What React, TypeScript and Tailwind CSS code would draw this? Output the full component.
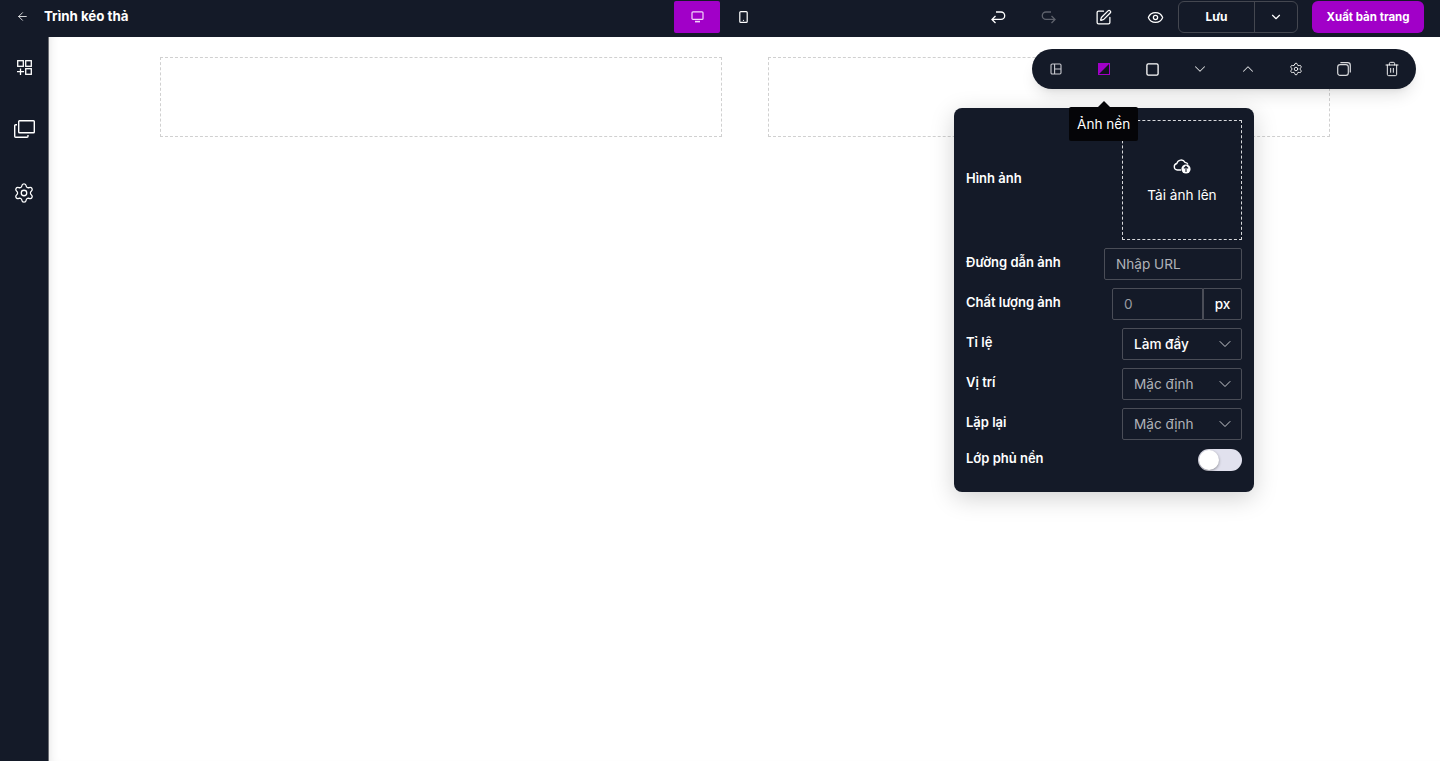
import React from "react";
import { ArrowLeft, SquarePen, Eye, ChevronDown, ChevronUp, Settings, Trash2 } from "lucide-react";

function BlocksIcon() {
  return (
    <svg width="15" height="15" viewBox="0 0 15 15" fill="none" stroke="currentColor" strokeWidth="1.3">
      <rect x="0.7" y="0.7" width="5.6" height="5.6" />
      <rect x="8.7" y="0.7" width="5.6" height="5.6" />
      <rect x="8.7" y="8.7" width="5.6" height="5.6" />
      <path d="M3.5 8.5v6.5M0 11.7h7" />
    </svg>
  );
}

function PagesIcon() {
  return (
    <svg width="21" height="18" viewBox="0 0 21 18" fill="none" stroke="currentColor" strokeWidth="1.4">
      <rect x="4.7" y="0.7" width="15.6" height="12" rx="0.8" />
      <path d="M3 4.7H1.7a1 1 0 0 0-1 1V16.3a1 1 0 0 0 1 1H13a1 1 0 0 0 1-1V15" />
    </svg>
  );
}

function MonitorIcon() {
  return (
    <svg width="13" height="12" viewBox="0 0 13 12" fill="none" stroke="currentColor" strokeWidth="1.2" className="text-[#f3d6fa]">
      <rect x="1" y="0.8" width="11" height="7.6" rx="1" />
      <path d="M4 10.6h5" strokeWidth="1.6" />
    </svg>
  );
}

function PhoneIcon() {
  return (
    <svg width="9" height="12" viewBox="0 0 9 12" fill="none" stroke="currentColor" strokeWidth="1.2">
      <rect x="0.8" y="0.6" width="7.4" height="10.8" rx="1" />
      <circle cx="4.5" cy="9.3" r="0.6" fill="currentColor" stroke="none" />
    </svg>
  );
}

function UndoIcon() {
  return (
    <svg width="16" height="16" viewBox="0 0 16 16" fill="none" stroke="currentColor" strokeWidth="1.3">
      <path d="M6 2H11a3.7 3.7 0 0 1 0 7.4H2M5.5 6L2 9.4L5.5 13" />
    </svg>
  );
}

function RedoIcon() {
  return (
    <svg width="16" height="16" viewBox="0 0 16 16" fill="none" stroke="currentColor" strokeWidth="1.3" className="text-[#5e626c]">
      <path d="M10 2H5a3.7 3.7 0 0 0 0 7.4H14M10.5 6L14 9.4L10.5 13" />
    </svg>
  );
}

function PanelIcon() {
  return (
    <svg width="12" height="12" viewBox="0 0 12 12" fill="none" stroke="currentColor" strokeWidth="1.1" className="text-[#c9cad0]">
      <rect x="1" y="1" width="10" height="10" rx="1.2" />
      <path d="M4.6 1v10M4.6 6H11" />
    </svg>
  );
}

function BackgroundIcon() {
  return (
    <svg width="12" height="12" viewBox="0 0 12 12">
      <rect x="0.5" y="0.5" width="11" height="11" fill="#11141f" stroke="#a100c8" />
      <path d="M0 0H12L0 12Z" fill="#a100c8" />
    </svg>
  );
}

function SquareIcon() {
  return (
    <svg width="13" height="13" viewBox="0 0 13 13" fill="none" stroke="currentColor" strokeWidth="1.3">
      <rect x="0.9" y="0.9" width="11.2" height="11.2" rx="1.4" />
    </svg>
  );
}

function CopyIcon() {
  return (
    <svg width="14" height="14" viewBox="0 0 14 14" fill="none" stroke="#d8d9dc" strokeWidth="1.2">
      <rect x="0.7" y="2.7" width="10.6" height="10.6" rx="2.4" />
      <path d="M3.4 0.7H10.6A2.7 2.7 0 0 1 13.3 3.4V10.6" />
    </svg>
  );
}

function CloudIcon() {
  return (
    <svg width="18" height="16" viewBox="0 0 18 16">
      <path
        d="M8 12H4.3A3.3 3.3 0 0 1 3.8 5.5 4.4 4.4 0 0 1 12 4.4 3.4 3.4 0 0 1 15 6.6"
        fill="none"
        stroke="currentColor"
        strokeWidth="1.3"
      />
      <circle cx="13" cy="11" r="4.6" fill="currentColor" />
      <path d="M13 14V8.4M10.9 10.4L13 8.3L15.1 10.4" fill="none" stroke="#141a28" strokeWidth="1.1" />
    </svg>
  );
}

function ToolButton({ children }: { children: React.ReactNode }) {
  return <div className="flex h-10 w-12 items-center justify-center">{children}</div>;
}

function Row({ label, children, className = "" }: { label: string; children: React.ReactNode; className?: string }) {
  return (
    <div className={`flex items-center justify-between ${className}`}>
      <span className="-mt-1 text-[13px] leading-5 font-semibold text-white">{label}</span>
      {children}
    </div>
  );
}

function SelectBox({ value, muted = false }: { value: string; muted?: boolean }) {
  return (
    <div className="flex h-8 w-[120px] items-center justify-between rounded-[2px] border border-[#4a4d57] pr-[6px] pl-[11px]">
      <span className={`text-[13.6px] ${muted ? "text-[#b0b2b8]" : "font-medium text-white"}`}>{value}</span>
      <ChevronDown size={20} strokeWidth={1.1} className="text-[#d8d9dc]" />
    </div>
  );
}

export default function App() {
  return (
    <div className="relative flex h-[761px] w-[1440px] flex-col overflow-hidden bg-white font-['Inter',sans-serif] text-white">
      <header className="flex h-[37px] shrink-0 items-start bg-[#141a28]">
        <div className="flex h-8 w-[674px] items-center">
          <ArrowLeft size={13} strokeWidth={1.5} className="ml-[16px]" />
          <span className="mt-px ml-[15px] text-[13.3px] font-bold">Trình kéo thả</span>
        </div>
        <div className="mt-px flex">
          <div className="flex h-8 w-[46px] items-center justify-center rounded-[2px] bg-[#a100c8]">
            <MonitorIcon />
          </div>
          <div className="flex h-8 w-[46px] items-center justify-center">
            <PhoneIcon />
          </div>
        </div>
        <div className="mt-px ml-auto flex items-center pr-4">
          <div className="mt-[2px] mr-[35px]"><UndoIcon /></div>
          <div className="mt-[2px] mr-[38px]"><RedoIcon /></div>
          <SquarePen size={17} strokeWidth={1.8} className="mr-[35px]" />
          <Eye size={17} strokeWidth={1.8} className="mr-[14px]" />
          <div className="flex h-8 w-[120px] rounded-md border border-[#444750]">
            <div className="flex w-[76px] items-center justify-center border-r border-[#444750] text-xs font-bold">Lưu</div>
            <div className="flex flex-1 items-center justify-center">
              <ChevronDown size={14} strokeWidth={2} />
            </div>
          </div>
          <button className="ml-[14px] flex h-8 w-[112px] items-center justify-center rounded-md bg-[#a100c8] pt-px text-[11.5px] font-bold text-white">
            Xuất bản trang
          </button>
        </div>
      </header>

      <div className="flex min-h-0 flex-1">
        <aside className="flex w-[49px] shrink-0 flex-col items-center border-r border-[#6b6d73] bg-[#141a28] pt-[23px]">
          <BlocksIcon />
          <div className="mt-[45px]"><PagesIcon /></div>
          <Settings size={22} strokeWidth={1.4} className="mt-[44px]" />
        </aside>
        <main className="flex flex-1 items-start gap-[46px] pt-5 pr-[110px] pl-[111px] shadow-[inset_8px_0_12px_-10px_rgba(0,0,0,0.18)]">
          <div className="h-20 flex-1 border border-dashed border-[#d0d0d0]" />
          <div className="h-20 flex-1 border border-dashed border-[#d0d0d0]" />
        </main>
      </div>

      <div className="absolute top-[49px] left-[1032px] flex h-10 w-[384px] rounded-[20px] bg-[#141a28] shadow-lg">
        <ToolButton><PanelIcon /></ToolButton>
        <ToolButton><BackgroundIcon /></ToolButton>
        <ToolButton><SquareIcon /></ToolButton>
        <ToolButton><ChevronDown size={18} strokeWidth={1.4} className="text-[#d8d9dc]" /></ToolButton>
        <ToolButton><ChevronUp size={18} strokeWidth={1.4} className="text-[#d8d9dc]" /></ToolButton>
        <ToolButton><Settings size={14} strokeWidth={1.5} /></ToolButton>
        <ToolButton><CopyIcon /></ToolButton>
        <ToolButton><Trash2 size={16} strokeWidth={1.4} /></ToolButton>
      </div>

      <div className="absolute top-[108px] left-[954px] flex w-[300px] flex-col gap-2 rounded-lg bg-[#141a28] px-3 pt-3 pb-[21px] shadow-[0_6px_24px_rgba(0,0,0,0.18)]">
        <Row label="Hình ảnh">
          <div className="flex h-[120px] w-[120px] flex-col items-center justify-center rounded-[1px] border border-dashed border-[#d8d9dc] pt-[3px]">
            <CloudIcon />
            <span className="mt-[11px] text-[13.6px] leading-5">Tải ảnh lên</span>
          </div>
        </Row>
        <Row label="Đường dẫn ảnh">
          <div className="flex h-8 w-[138px] items-center rounded-[2px] border border-[#4a4d57] pl-[11px] text-[13.6px] text-[#b0b2b8]">Nhập URL</div>
        </Row>
        <Row label="Chất lượng ảnh">
          <div className="flex h-8 w-[130px]">
            <div className="flex w-[91px] items-center rounded-l-[2px] border border-[#4a4d57] pl-[11px] text-[13.6px] text-[#9a9ca3]">0</div>
            <div className="flex flex-1 items-center justify-center rounded-r-[2px] border border-[#4a4d57] text-[13.6px] font-medium">px</div>
          </div>
        </Row>
        <Row label="Tỉ lệ"><SelectBox value="Làm đầy" /></Row>
        <Row label="Vị trí"><SelectBox value="Mặc định" muted /></Row>
        <Row label="Lặp lại"><SelectBox value="Mặc định" muted /></Row>
        <Row label="Lớp phủ nền" className="mt-px">
          <div className="flex h-[22px] w-11 items-center rounded-full bg-[#e1e1ee] pl-px">
            <div className="h-5 w-5 rounded-full bg-white shadow-[0_1px_3px_rgba(0,0,0,0.4)]" />
          </div>
        </Row>
      </div>

      <div className="absolute top-[107px] left-[1069px] rounded-[2px] bg-[#050508] px-2 py-[6px] text-[13.6px] leading-[22px] text-white">
        Ảnh nền
        <span className="absolute -top-[6px] left-1/2 h-0 w-0 -translate-x-1/2 border-x-[7px] border-b-[7px] border-x-transparent border-b-[#050508]" />
      </div>
    </div>
  );
}
